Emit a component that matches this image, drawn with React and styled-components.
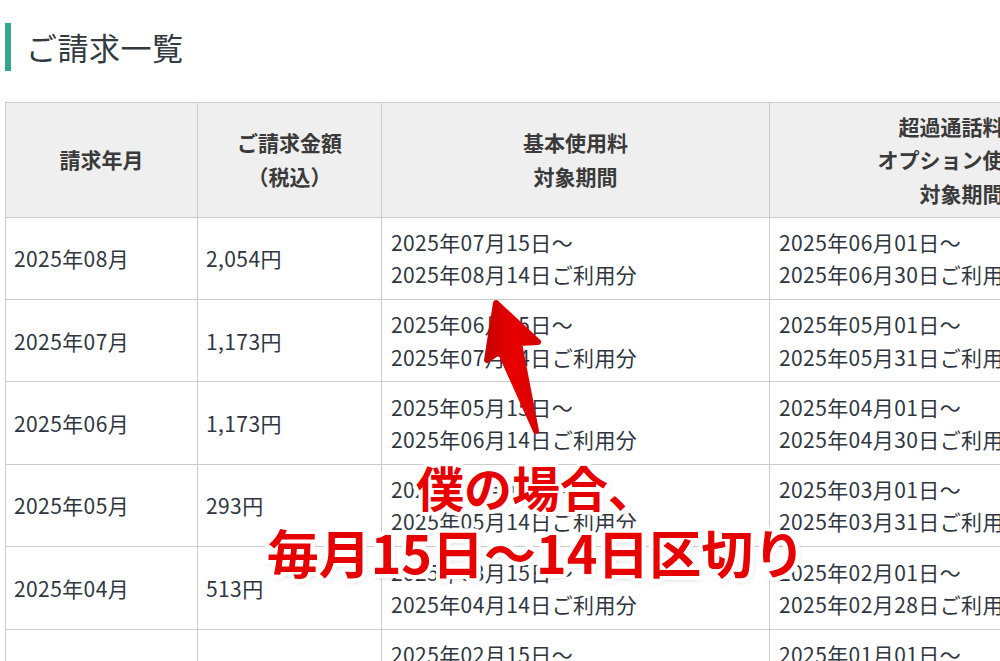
import React from "react";
import styled, { createGlobalStyle } from "styled-components";

const GlobalStyle = createGlobalStyle`
  html, body {
    margin: 0;
    padding: 0;
    background: #ffffff;
    overflow: hidden;
  }
  body {
    font-family: "Noto Sans CJK JP", "Noto Sans", sans-serif;
    color: #333333;
  }
`;

const Page = styled.div`
  position: relative;
  width: 1000px;
  height: 661px;
  overflow: hidden;
  box-sizing: border-box;
  padding: 23px 0 0 5px;
`;

const Title = styled.h2`
  margin: 0 0 31px 0;
  height: 48px;
  line-height: 48px;
  border-left: 6px solid #35a68a;
  padding-left: 15px;
  font-size: 31px;
  font-weight: 400;
  color: #333a40;
  letter-spacing: 0.5px;
`;

const Table = styled.table`
  border-collapse: collapse;
  table-layout: fixed;
  width: 1148px;
`;

const Col = styled.col`
  width: ${(p) => p.$w}px;
`;

const Th = styled.th`
  background: #efefef;
  border: 1px solid #cccccc;
  font-size: 21px;
  font-weight: 700;
  line-height: 33.5px;
  padding: 6.5px 8px;
  text-align: center;
  vertical-align: middle;
  color: #3a3a3a;
  white-space: nowrap;
`;

const Td = styled.td`
  border: 1px solid #cccccc;
  font-size: 21px;
  font-weight: 400;
  line-height: 32.2px;
  letter-spacing: 0.4px;
  padding: 8.5px 8px 8.5px ${(p) => (p.$wide ? 9 : 8)}px;
  text-align: left;
  vertical-align: middle;
  color: #2f3640;
  white-space: nowrap;
`;

const Overlay = styled.div`
  position: absolute;
  inset: 0;
  pointer-events: none;
`;

const ArrowSvg = styled.svg`
  position: absolute;
  left: 0;
  top: 0;
`;

const Callout = styled.div`
  position: absolute;
  left: 236px;
  top: 453px;
  width: 600px;
  text-align: center;
  font-family: "Noto Sans CJK JP", "Noto Sans", sans-serif;
  font-weight: 700;
  color: #e60000;
  line-height: 66px;
  text-shadow:
    4px 0 0 #fff, -4px 0 0 #fff, 0 4px 0 #fff, 0 -4px 0 #fff,
    3px 3px 0 #fff, -3px 3px 0 #fff, 3px -3px 0 #fff, -3px -3px 0 #fff,
    2px 4px 0 #fff, -2px 4px 0 #fff, 2px -4px 0 #fff, -2px -4px 0 #fff,
    4px 2px 0 #fff, -4px 2px 0 #fff, 4px -2px 0 #fff, -4px -2px 0 #fff,
    1px 2px 6px rgba(0, 0, 0, 0.35);
`;

const CalloutLine = styled.div`
  font-size: ${(p) => p.$size}px;
  letter-spacing: ${(p) => p.$ls || 0}px;
`;

const rows = [
  ["2025年08月", "2,054円", ["2025年07月15日～", "2025年08月14日ご利用分"], ["2025年06月01日～", "2025年06月30日ご利用分"]],
  ["2025年07月", "1,173円", ["2025年06月15日～", "2025年07月14日ご利用分"], ["2025年05月01日～", "2025年05月31日ご利用分"]],
  ["2025年06月", "1,173円", ["2025年05月15日～", "2025年06月14日ご利用分"], ["2025年04月01日～", "2025年04月30日ご利用分"]],
  ["2025年05月", "293円", ["2025年04月15日～", "2025年05月14日ご利用分"], ["2025年03月01日～", "2025年03月31日ご利用分"]],
  ["2025年04月", "513円", ["2025年03月15日～", "2025年04月14日ご利用分"], ["2025年02月01日～", "2025年02月28日ご利用分"]],
  ["2025年03月", "", ["2025年02月15日～", "2025年03月14日ご利用分"], ["2025年01月01日～", "2025年01月31日ご利用分"]],
];

function Lines({ items }) {
  return items.map((t, i) => (
    <React.Fragment key={i}>
      {i > 0 && <br />}
      {t}
    </React.Fragment>
  ));
}

export default function App() {
  return (
    <>
      <GlobalStyle />
      <Page>
        <Title>ご請求一覧</Title>
        <Table>
          <colgroup>
            <Col $w={192} />
            <Col $w={184} />
            <Col $w={388} />
            <Col $w={384} />
          </colgroup>
          <thead>
            <tr>
              <Th>請求年月</Th>
              <Th>
                <Lines items={["ご請求金額", "（税込）"]} />
              </Th>
              <Th>
                <Lines items={["基本使用料", "対象期間"]} />
              </Th>
              <Th>
                <Lines items={["超過通話料・", "オプション使用料", "対象期間"]} />
              </Th>
            </tr>
          </thead>
          <tbody>
            {rows.map((r, i) => (
              <tr key={i}>
                <Td>{r[0]}</Td>
                <Td>{r[1]}</Td>
                <Td $wide>
                  <Lines items={r[2]} />
                </Td>
                <Td $wide>
                  <Lines items={r[3]} />
                </Td>
              </tr>
            ))}
          </tbody>
        </Table>
        <Overlay>
          <ArrowSvg width="1000" height="661" viewBox="0 0 1000 661">
            <defs>
              <linearGradient id="arrowGrad" x1="0" y1="0" x2="1" y2="0">
                <stop offset="0" stopColor="#c80000" />
                <stop offset="0.5" stopColor="#e80000" />
                <stop offset="1" stopColor="#d80000" />
              </linearGradient>
            </defs>
            <polygon
              points="496,303 538,342 519,343 536,431 500,351 487,360"
              fill="url(#arrowGrad)"
              stroke="url(#arrowGrad)"
              strokeWidth="6"
              strokeLinejoin="round"
            />
          </ArrowSvg>
          <Callout>
            <CalloutLine $size={48}>僕の場合、</CalloutLine>
            <CalloutLine $size={52}>毎月15日～14日区切り</CalloutLine>
          </Callout>
        </Overlay>
      </Page>
    </>
  );
}
